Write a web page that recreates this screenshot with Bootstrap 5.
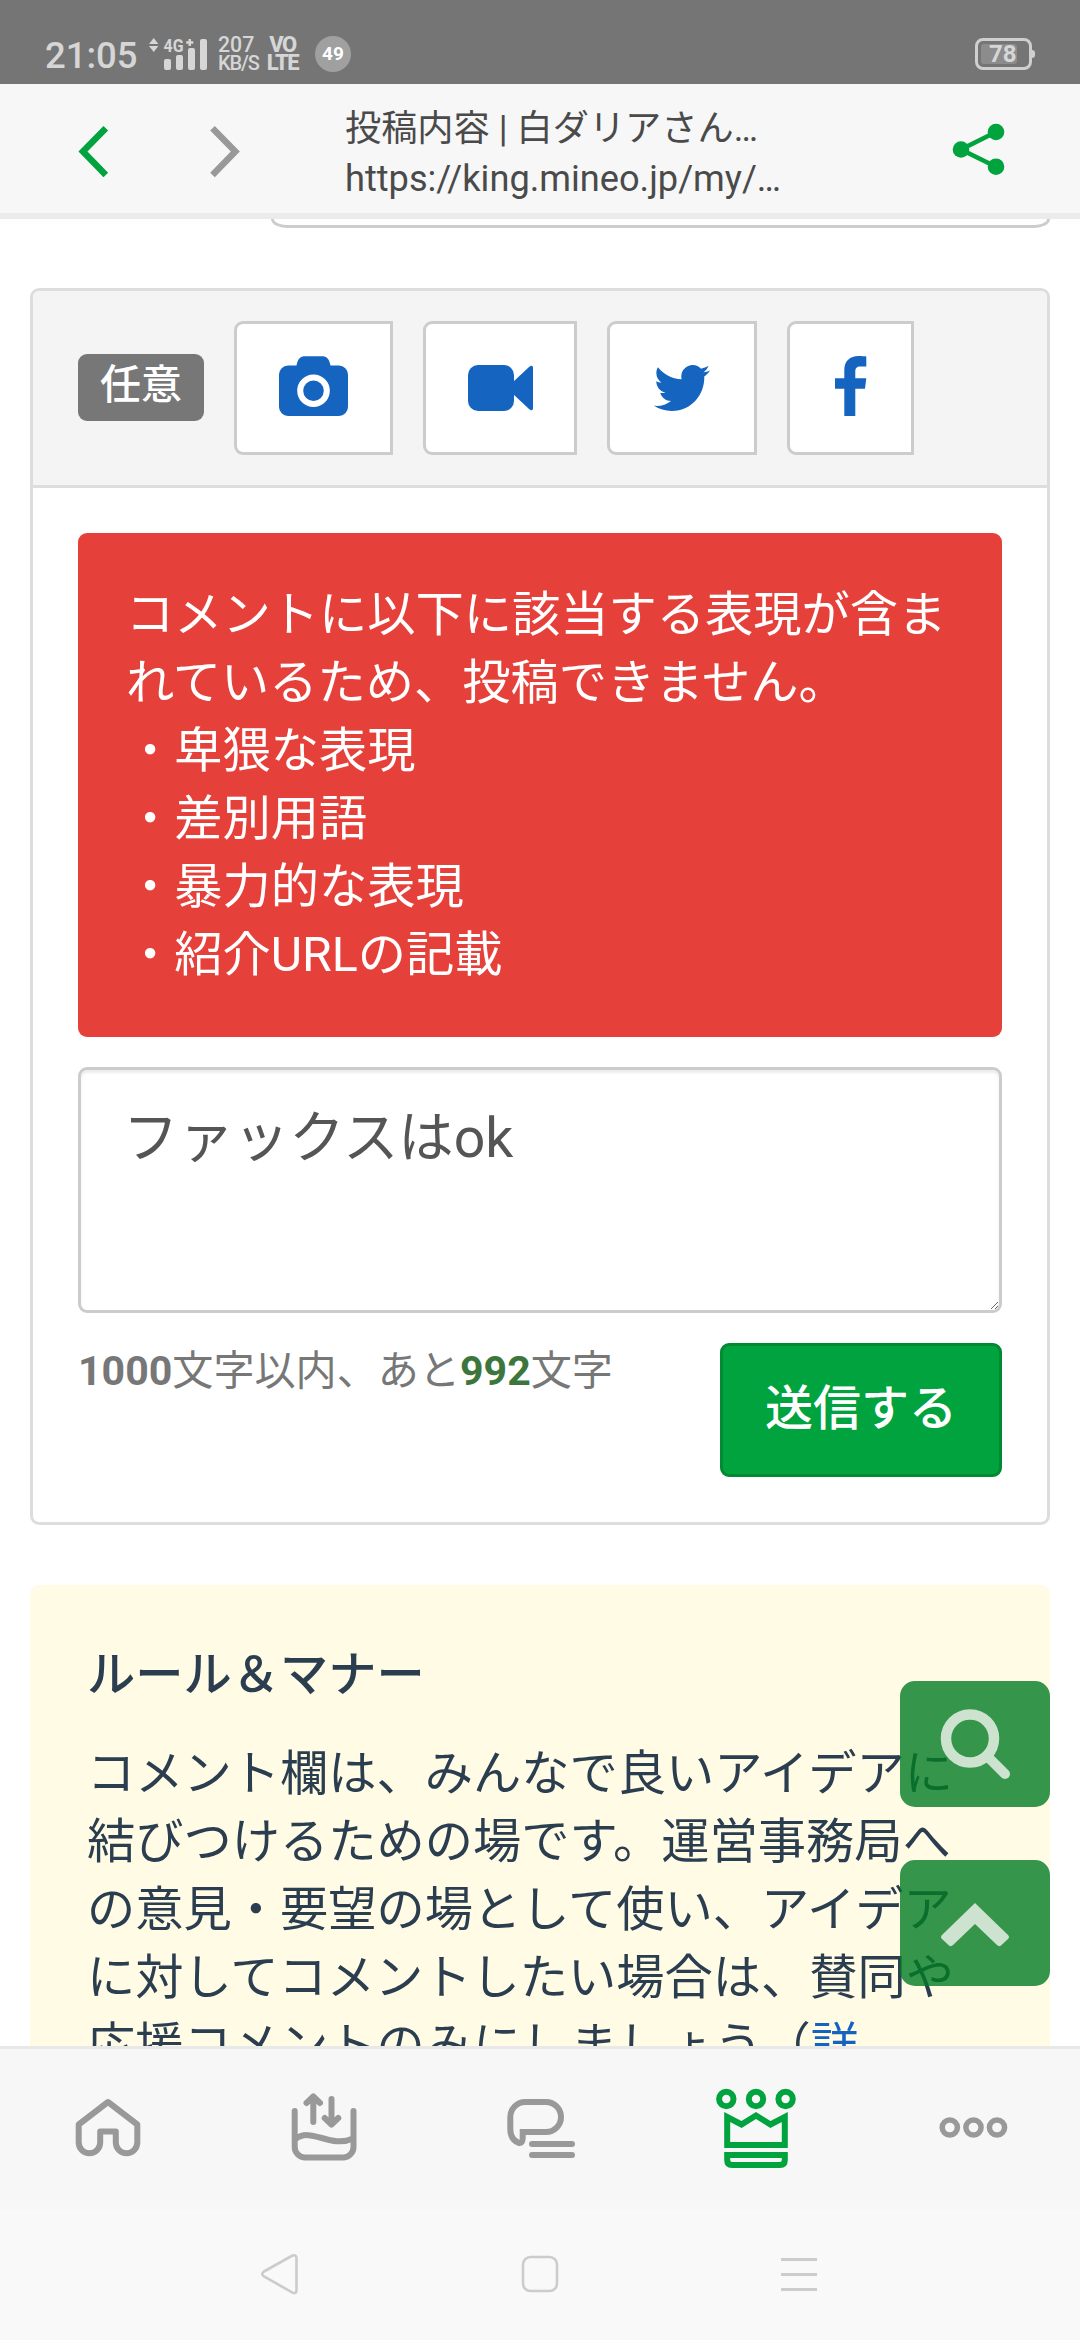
<!DOCTYPE html>
<html lang="ja">
<head>
<meta charset="utf-8">
<meta name="viewport" content="width=device-width, initial-scale=1">
<title>投稿内容 | 白ダリアさん</title>
<link href="https://cdn.jsdelivr.net/npm/bootstrap@5.3.0/dist/css/bootstrap.min.css" rel="stylesheet">
<style>
body{font-family:Roboto,"Noto Sans CJK JP",sans-serif;background:#fff;color:#2b3e50}
.screen{width:1080px;height:2340px}
svg{display:block;flex:none}
.status{height:84px;background:#757575;color:#d6d6d6;padding:24px 45px 0 45px}
.status .clock{font-size:36.5px;font-weight:500;line-height:60px;width:104px;white-space:nowrap;padding-top:2px}
.signal{margin-top:15px}
.tiny{font-weight:500;line-height:18px;white-space:nowrap;margin-top:12px}
.rate{font-size:21.3px;width:50px;margin-left:11px}
.rate span{font-size:20px;line-height:18px;letter-spacing:-1.1px}
.volte{font-size:22px;width:33px;margin-left:-2px;font-weight:800;display:flex;flex-direction:column;align-items:center;letter-spacing:-1.400px}
.count-dot{width:36px;height:36px;margin:12px 0 0 16px;background:#a0a0a0;color:#fff;font-size:19px;font-weight:700}
.battery{width:57px;height:32px;margin:14px 3px 0 0;border:3px solid #cfcfcf;border-radius:8px;padding:3px;font-size:24px;font-weight:700;line-height:20px}
.battery .level{width:36px;height:20px;background:#8c8c8c;border-radius:3px;padding-left:8px}
.battery::after{content:"";position:absolute;right:-6px;top:9px;width:3px;height:8px;background:#cfcfcf;border-radius:0 3px 3px 0}
.topbar{height:135px;background:#f7f7f7;border-bottom:6px solid #ebebeb;color:#4a4a4a;padding:0 75px}
.topbar .fwd{margin-left:95px}
.topbar .titles{width:449px;font-size:36.2px;line-height:50px;margin-left:103px;padding-top:10px}
.main-area{height:1827px;padding:0 30px}
.prev-field{height:9px;width:779px;border:3px solid #ccc;border-top:0;border-radius:0 0 16px 16px/0 0 9px 9px}
.composer{margin-top:60px;height:1237px;border:3px solid #ddd;border-radius:9px}
.composer .tools{height:197px;background:#f4f4f4;border-bottom:3px solid #ddd;border-radius:6px 6px 0 0;padding:0 45px;gap:30px}
.opt{background:#777;border-radius:9px;width:126px;height:67px;margin-bottom:1px;font-size:41px;line-height:62px;font-weight:500;color:#fff;text-align:center;padding:0}
.tool{height:134px;border:3px solid #ccc;border-radius:9px 0 0 9px;background:#fff;padding:0;display:flex;align-items:center;justify-content:center}
.tool.raised{padding-bottom:4px}
.form-area{padding:45px}
.warn{background:#e6403a;color:#fff;border:0;border-radius:9px;padding:48px;font-size:48.25px;line-height:68px;margin-bottom:30px;height:504px}
.field{height:246px;border:3px solid #ccc;border-radius:9px;padding:33px 42px;font-size:55.4px;line-height:72px;color:#555!important;box-shadow:inset 0 3px 3px rgba(0,0,0,.075);margin-bottom:30px;overflow:hidden}
.hint{font-size:41.1px;line-height:56px;color:#777}
.hint .left{color:#3c763d}
.send{width:282px;height:134px;background:#00a33e;border:3px solid #008a32;border-radius:9px;color:#fff;font-size:48px;font-weight:500;line-height:68px;padding:0 0 3px}
.rules{margin-top:60px;height:600px;background:#fffbe5;border-radius:9px;padding:56px 57px;font-size:48.25px;line-height:68px}
.rules h2{font-size:48.25px;font-weight:500;line-height:68px;margin:0 0 31px}
.rules a{color:#1463c0}
.fabs{right:30px;top:1681px;gap:53px;z-index:2}
.fab{width:150px;height:126px;border:0;border-radius:15px;background:rgba(2,124,35,.8);padding:0}
.tabs{height:164px;background:#f7f7f7;border-top:3px solid #e8e8e8}
.tabs a{width:216px;color:#999}
.tabs a.current{color:#00a33e}
.sysnav{height:130px;background:#f9f9f9;padding:0 262px 3px 261px}
</style>
</head>
<body>
<div class="screen d-flex flex-column position-relative overflow-hidden">
  <header class="status d-flex justify-content-between align-items-start flex-shrink-0">
    <div class="d-flex">
      <div class="clock">21:05</div>
      <svg class="signal" width="58" height="31" viewBox="0 5 58 31" overflow="visible" fill="#d6d6d6">
        <path d="M0 10 4.700 4 9.400 10zM0 12H9.400L4.700 18z"/>
        <text x="14.500" y="18" font-size="17.500" font-weight="700" font-family="Roboto,sans-serif" textLength="20" lengthAdjust="spacingAndGlyphs">4G</text>
        <path d="M39.500 5h2.500v2.300h2.300v2.500h-2.300v2.300h-2.500V9.800h-2.300V7.300h2.300z"/>
        <rect x="15" y="25" width="7" height="11" rx="2"/><rect x="27" y="21" width="7" height="15" rx="2"/><rect x="39" y="14" width="7" height="22" rx="2"/><rect x="51" y="5" width="7" height="31" rx="2"/>
      </svg>
      <div class="tiny rate">207<br><span>KB/S</span></div>
      <div class="tiny volte"><span>VO</span><span>LTE</span></div>
      <div class="count-dot rounded-circle d-flex align-items-center justify-content-center">49</div>
    </div>
    <div class="battery position-relative"><div class="level">78</div></div>
  </header>

  <nav class="topbar d-flex align-items-center flex-shrink-0">
    <svg width="36" height="56" viewBox="75 121 36 56" overflow="visible" fill="none" stroke="#00a33e" stroke-width="6.500"><path d="M105.800 128.300 83 151.600 105.800 175"/></svg>
    <svg class="fwd" width="36" height="56" viewBox="206 121 36 56" overflow="visible" fill="none" stroke="#999" stroke-width="6.500"><path d="M212.500 128.300 235.300 151.600 212.500 175"/></svg>
    <div class="titles"><div class="text-nowrap">投稿内容 | 白ダリアさん…</div><div class="text-nowrap">https://king.mineo.jp/my/…</div></div>
    <svg width="54" height="54" viewBox="949 121 54 54" class="ms-auto" fill="#00a33e"><path d="M994 131 959 148.500 994 165.700" fill="none" stroke="#00a33e" stroke-width="4.600"/><circle cx="959" cy="148.500" r="8.300"/><circle cx="994" cy="131" r="8.300"/><circle cx="994" cy="165.700" r="8.300"/></svg>
  </nav>

  <main class="main-area flex-shrink-0 overflow-hidden">
    <div class="prev-field ms-auto"></div>
    <section class="composer">
      <div class="tools d-flex align-items-center">
        <span class="opt">任意</span>
        <button class="tool raised" style="width:159px" aria-label="写真"><svg width="69" height="61" viewBox="0 0 69 61" fill="#1565c0"><path d="M9 9.500h8.500C18.500 4 21 .3 25 .3h19c4 0 6.500 3.700 7.500 9.200H60a9 9 0 0 1 9 9V51a9 9 0 0 1-9 9H9a9 9 0 0 1-9-9V18.500a9 9 0 0 1 9-9z"/><circle cx="34.500" cy="34.700" r="13.300" fill="none" stroke="#fff" stroke-width="6"/></svg></button>
        <button class="tool" style="width:154px" aria-label="動画"><svg width="65" height="46" viewBox="0 0 65 46" fill="#1565c0"><rect width="46" height="46" rx="10"/><path d="M45 17 61 2Q65-1 65 3V43Q65 47 61 44L45 29z"/></svg></button>
        <button class="tool" style="width:150px" aria-label="Twitter"><svg width="56" height="46" viewBox="0 48 512 416" preserveAspectRatio="none" fill="#1565c0"><path d="M459.370 151.716c.325 4.548.325 9.097.325 13.645 0 138.720-105.583 298.558-298.558 298.558-59.452 0-114.680-17.219-161.137-47.106 8.447.974 16.568 1.299 25.340 1.299 49.055 0 94.213-16.568 130.274-44.832-46.132-.975-84.792-31.188-98.112-72.772 6.498.974 12.995 1.624 19.818 1.624 9.421 0 18.843-1.300 27.614-3.573-48.081-9.747-84.143-51.980-84.143-102.985v-1.299c13.969 7.797 30.214 12.670 47.431 13.319-28.264-18.843-46.781-51.005-46.781-87.391 0-19.492 5.197-37.360 14.294-52.954 51.655 63.675 129.300 105.258 216.365 109.807-1.624-7.797-2.599-15.918-2.599-24.040 0-57.828 46.782-104.934 104.934-104.934 30.213 0 57.502 12.670 76.670 33.137 23.715-4.548 46.456-13.320 66.599-25.340-7.798 24.366-24.366 44.833-46.132 57.827 21.117-2.273 41.584-8.122 60.426-16.243-14.292 20.791-32.161 39.308-52.628 54.253z"/></svg></button>
        <button class="tool raised" style="width:127px" aria-label="Facebook"><svg width="32" height="60" viewBox="0 0 32 60" fill="#1565c0"><path d="M31.300 .5V10.500H25.500c-4 0-5.200 2-5.200 5V22.300H31.300L30 32.700H20.300V60H9.300V32.700H0V22.300H9.300V14C9.300 5 15 0 23.500 0c3.500 0 6 .2 7.800.5z"/></svg></button>
      </div>
      <div class="form-area">
        <div class="warn alert">コメントに以下に該当する表現が含まれているため、投稿できません。<br>・卑猥な表現<br>・差別用語<br>・暴力的な表現<br>・紹介URLの記載</div>
        <textarea class="field form-control">ファックスはok</textarea>
        <div class="d-flex justify-content-between align-items-start">
          <div class="hint"><b>1000</b>文字以内、あと<b class="left">992</b>文字</div>
          <button class="send btn">送信する</button>
        </div>
      </div>
    </section>
    <section class="rules">
      <h2>ルール＆マナー</h2>
      <div>コメント欄は、みんなで良いアイデアに結びつけるための場です。運営事務局への意見・要望の場として使い、アイデアに対してコメントしたい場合は、賛同や応援コメントのみにしましょう（<a href="#">詳</a></div>
    </section>
  </main>

  <div class="fabs position-absolute d-flex flex-column">
    <button class="fab" aria-label="検索"><svg width="150" height="126" viewBox="900 1681 150 126" fill="none" stroke="#cde3cf"><circle cx="970" cy="1738.500" r="24" stroke-width="10.500"/><path d="M988 1757 1005 1774" stroke-width="10" stroke-linecap="round"/></svg></button>
    <button class="fab" aria-label="上へ"><svg width="150" height="126" viewBox="900 1860 150 126" fill="#cde3cf"><path d="M975 1903 1008 1935Q1010 1937 1008 1939L1001 1945.500Q999 1947 997 1945L975 1924 953 1945Q951 1947 949 1945.500L942 1939Q940 1937 942 1935z"/></svg></button>
  </div>

  <nav class="tabs d-flex flex-shrink-0">
    <a href="#" aria-label="ホーム"><svg width="216" height="160" viewBox="0 2049 216 160" fill="none" stroke="currentColor" stroke-width="6" stroke-linejoin="round"><path d="M108 2102 78.700 2124.500V2142.500a10.700 10.700 0 0 0 21.500 0V2131.500H115.800V2142.500a10.700 10.700 0 0 0 21.500 0V2124.500z"/></svg></a>
    <a href="#" aria-label="データ"><svg width="216" height="160" viewBox="216 2049 216 160" fill="none" stroke="currentColor" stroke-width="6" stroke-linecap="round" stroke-linejoin="round"><path d="M294.700 2111V2147a10.500 10.500 0 0 0 10.500 10.500H343a10.500 10.500 0 0 0 10.500-10.500V2111M295 2139.500C311 2126 330 2149 353 2138.500M313.300 2122V2096.500M306.500 2103 313.300 2096.500 320 2103M331.500 2099V2124.500M324.700 2118 331.500 2124.500 338.300 2118"/></svg></a>
    <a href="#" aria-label="トーク"><svg width="216" height="160" viewBox="432 2049 216 160" fill="none" stroke="currentColor" stroke-width="6"><path d="M546 2132A15 15 0 0 0 546 2102H525.500A15 15 0 0 0 510.300 2117V2129C510.300 2137 514 2141 519 2143Q522.700 2143.500 522.700 2138V2132z"/><path stroke-linecap="round" d="M532 2144H572M532 2155H572"/></svg></a>
    <a href="#" class="current" aria-label="マイネ王"><svg width="216" height="160" viewBox="648 2049 216 160" fill="none" stroke="currentColor" stroke-width="6"><circle cx="726.300" cy="2099" r="7.200"/><circle cx="756" cy="2099" r="7.200"/><circle cx="785.600" cy="2099" r="7.200"/><path d="M727.200 2117V2145H784.800V2117L770.500 2124.500 756 2115.500 741.500 2124.500zM727.200 2155H784.800V2160Q784.800 2165 780 2165H732Q727.200 2165 727.200 2160z"/></svg></a>
    <a href="#" aria-label="その他"><svg width="216" height="160" viewBox="864 2049 216 160" fill="none" stroke="currentColor" stroke-width="5.500"><circle cx="949.800" cy="2127.500" r="7.600"/><circle cx="973.500" cy="2127.500" r="7.600"/><circle cx="997" cy="2127.500" r="7.600"/></svg></a>
  </nav>
  <footer class="sysnav d-flex justify-content-between align-items-center flex-shrink-0">
    <svg width="38" height="42" viewBox="261 2253 38 42" fill="none" stroke="#ccc" stroke-width="2.600"><path d="M264 2271.500 292 2255.800Q296.500 2254 296.500 2258.500V2290Q296.500 2294.500 292 2292.300L264 2276.500Q260.500 2274 264 2271.500z"/></svg>
    <svg width="38" height="38" viewBox="0 0 38 38" fill="none" stroke="#ccc" stroke-width="2.600"><rect x="2" y="2" width="34" height="34" rx="7.500"/></svg>
    <svg width="38" height="38" viewBox="0 0 38 38" stroke="#ccc" stroke-width="3"><path d="M1 4.500H37M1 19.500H37M1 34.500H37"/></svg>
  </footer>
</div>
<script src="https://cdn.jsdelivr.net/npm/bootstrap@5.3.0/dist/js/bootstrap.bundle.min.js"></script>
</body>
</html>
